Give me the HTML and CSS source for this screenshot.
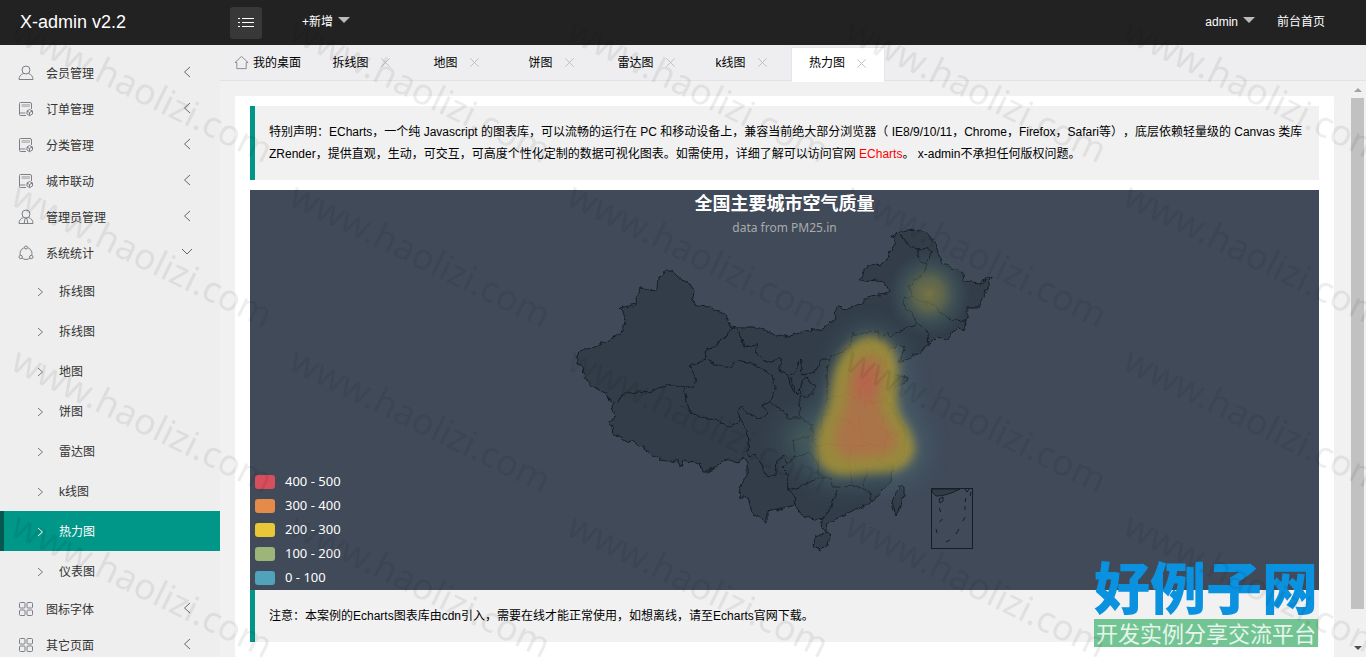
FILE: index.html
```html
<!DOCTYPE html>
<html lang="zh-CN">
<head>
<meta charset="utf-8">
<title>X-admin v2.2</title>
<link rel="stylesheet" href="styles.css">
</head>
<body>
<svg class="defs" aria-hidden="true">
  <symbol id="user" viewBox="0 0 16 16"><circle cx="8" cy="5" r="4"/><path d="M5.5 8.5C2.5 9.5 1 11.500 1 14.500h14c0-3-1.500-5-4.500-6"/></symbol>
  <symbol id="admin" viewBox="0 0 16 16"><circle cx="8" cy="5" r="4"/><path d="M5.500 8.500C2.500 9.500 1 11.500 1 14.500h14c0-3-1.500-5-4.500-6M7 9.500h2l.8 5M7 9.500l-.8 5"/></symbol>
  <symbol id="form" viewBox="0 0 16 16"><path d="M8 14.500H2.500q-1 0-1-1v-11q0-1 1-1H12q1.500 0 1.500 1.500v5M1.500 12h6"/><path d="M4 3.500h7.500v2H4z" class="soft"/><path d="M11.500 8.500l3 1.500v3l-3 1.700L9 13v-3zM9 10l2.500 1.500L14.500 10M11.500 11.500v3"/></symbol>
  <symbol id="share" viewBox="0 0 16 16"><circle cx="8" cy="8.500" r="6"/><circle cx="8" cy="2.500" r="1.500" class="node"/><circle cx="2.700" cy="12" r="1.700" class="node"/><circle cx="13.300" cy="12" r="1.700" class="node"/></symbol>
  <symbol id="grid" viewBox="0 0 16 16"><rect x="1.500" y="1.500" width="5.500" height="5.500" rx="1"/><rect x="9" y="1.500" width="5.500" height="5.500" rx="1"/><rect x="1.500" y="9" width="5.500" height="5.500" rx="1"/><rect x="9" y="9" width="5.500" height="5.500" rx="1"/></symbol>
  <symbol id="left" viewBox="0 0 12 12"><path d="M9 1L3.500 6 9 11"/></symbol>
  <symbol id="down" viewBox="0 0 12 12"><path d="M1 3l5 5 5-5"/></symbol>
  <symbol id="right" viewBox="0 0 12 12"><path d="M4 2l4.500 4L4 10"/></symbol>
  <symbol id="close" viewBox="0 0 12 12"><path d="M1.500 1.500l9 9M10.500 1.500l-9 9"/></symbol>
</svg>

<header class="header">
  <a class="brand" href="#">X-admin v2.2</a>
  <button class="toggle" type="button" aria-label="菜单">
    <svg viewBox="0 0 16 12"><path d="M4 1.500h12M4 5.500h12M4 9.500h12M0 1.500h2M0 5.500h2M0 9.500h2"/></svg>
  </button>
  <button class="add" type="button">+新增<span class="caret"></span></button>
  <nav class="account">
    <button class="add" type="button">admin<span class="caret"></span></button>
    <a href="#">前台首页</a>
  </nav>
</header>

<div class="layout">
  <nav class="side">
    <a class="item" href="#"><svg class="icon"><use href="#user"/></svg>会员管理<svg class="arrow"><use href="#left"/></svg></a>
    <a class="item" href="#"><svg class="icon"><use href="#form"/></svg>订单管理<svg class="arrow"><use href="#left"/></svg></a>
    <a class="item" href="#"><svg class="icon"><use href="#form"/></svg>分类管理<svg class="arrow"><use href="#left"/></svg></a>
    <a class="item" href="#"><svg class="icon"><use href="#form"/></svg>城市联动<svg class="arrow"><use href="#left"/></svg></a>
    <a class="item" href="#"><svg class="icon"><use href="#admin"/></svg>管理员管理<svg class="arrow"><use href="#left"/></svg></a>
    <a class="item" href="#"><svg class="icon"><use href="#share"/></svg>系统统计<svg class="arrow"><use href="#down"/></svg></a>
    <a class="sub" href="#"><svg><use href="#right"/></svg>拆线图</a>
    <a class="sub" href="#"><svg><use href="#right"/></svg>拆线图</a>
    <a class="sub" href="#"><svg><use href="#right"/></svg>地图</a>
    <a class="sub" href="#"><svg><use href="#right"/></svg>饼图</a>
    <a class="sub" href="#"><svg><use href="#right"/></svg>雷达图</a>
    <a class="sub" href="#"><svg><use href="#right"/></svg>k线图</a>
    <a class="sub active" href="#"><svg><use href="#right"/></svg>热力图</a>
    <a class="sub" href="#"><svg><use href="#right"/></svg>仪表图</a>
    <a class="item" href="#"><svg class="icon"><use href="#grid"/></svg>图标字体<svg class="arrow"><use href="#left"/></svg></a>
    <a class="item" href="#"><svg class="icon"><use href="#grid"/></svg>其它页面<svg class="arrow"><use href="#left"/></svg></a>
  </nav>

  <main class="main">
    <div class="tabs">
      <a class="home" href="#"><svg viewBox="0 0 16 16"><path d="M1 8l7-6.500L15 8h-2v6.500H3V8z"/></svg>我的桌面</a>
      <a class="tab" href="#">拆线图<svg><use href="#close"/></svg></a>
      <a class="tab" href="#">地图<svg><use href="#close"/></svg></a>
      <a class="tab" href="#">饼图<svg><use href="#close"/></svg></a>
      <a class="tab" href="#">雷达图<svg><use href="#close"/></svg></a>
      <a class="tab" href="#">k线图<svg><use href="#close"/></svg></a>
      <a class="tab current" href="#">热力图<svg><use href="#close"/></svg></a>
    </div>
    <div class="frame">
      <div class="page">
        <section class="card">
          <blockquote class="note">特别声明：ECharts，一个纯 Javascript 的图表库，可以流畅的运行在 PC 和移动设备上，兼容当前绝大部分浏览器（ IE8/9/10/11，Chrome，Firefox，Safari等），底层依赖轻量级的 Canvas 类库 ZRender，提供直观，生动，可交互，可高度个性化定制的数据可视化图表。如需使用，详细了解可以访问官网 <a href="#">ECharts</a>。 x-admin不承担任何版权问题。</blockquote>
          <div class="chart">
            <h1>全国主要城市空气质量</h1>
            <p class="source">data from PM25.in</p>
            <svg class="map" viewBox="250 190 1069 400" role="img" aria-label="空气质量热力图">
              <defs>
                <filter id="rough" x="-5%" y="-5%" width="110%" height="110%"><feTurbulence type="fractalNoise" baseFrequency=".16" numOctaves="2" seed="4"/><feDisplacementMap in="SourceGraphic" scale="6" xChannelSelector="R" yChannelSelector="G"/></filter>
                <filter id="b14" x="-60%" y="-60%" width="220%" height="220%"><feGaussianBlur stdDeviation="13"/></filter>
                <filter id="b5" x="-30%" y="-30%" width="160%" height="160%"><feGaussianBlur stdDeviation="5"/></filter>
                <filter id="b6" x="-40%" y="-40%" width="180%" height="180%"><feGaussianBlur stdDeviation="6"/></filter>
                <radialGradient id="spot"><stop offset="0" stop-color="#a29645" stop-opacity=".7"/><stop offset=".35" stop-color="#7d8450" stop-opacity=".65"/><stop offset=".65" stop-color="#4f6d69" stop-opacity=".4"/><stop offset="1" stop-color="#46606d" stop-opacity="0"/></radialGradient>
                <radialGradient id="haze"><stop offset="0" stop-color="#587464" stop-opacity=".4"/><stop offset="1" stop-color="#46606d" stop-opacity="0"/></radialGradient>
              </defs>
              <g class="land" filter="url(#rough)">
                <path d="M577 358L580 351L590 348L597 345L607 341L622 333L625 322L623 312L619 308L637 304L636 300L641 288L657 290L658 278L665 275L666 271L673 270L675 274L682 280L688 282L694 291L692 302L697 306L710 307L724 314L731 327L737 328L760 328L768 332L788 337L805 331L823 329L836 318L833 312L837 307L847 309L862 303L870 296L890 292L885 283L877 280L863 282L861 278L869 264L880 266L886 261L896 243L892 237L900 232L915 230L927 233L935 243L942 264L953 268L963 273L964 281L980 283L992 276L986 293L979 307L967 307L967 321L963 330L958 327L947 340L937 337L930 344L918 353L899 363L904 348L898 344L890 351L886 360L888 370L895 375L908 377L907 381L895 387L886 399L893 407L898 420L904 428L906 440L903 455L893 467L890 482L872 502L850 512L827 523L826 531L821 529L822 520L803 517L795 505L777 510L767 512L767 522L752 513L748 497L739 497L740 487L747 475L747 463L743 457L738 463L727 459L708 471L703 471L698 462L683 461L681 467L678 462L660 460L632 441L628 442L613 433L610 420L615 418L612 405L607 394L595 389L585 378L584 365L577 363Z"/>
                <path d="M815 537L828 532L830 537L828 544L820 550L813 545ZM892 502L895 493L900 486L904 487L904 495L901 505L896 516ZM869 527l1 0"/>
                <g class="borders">
                  <path d="M731 327L728 336L720 340L715 347L707 348L705 360L689 366L696 378L694 387L684 387L673 384L662 387L648 393L638 392L622 394L618 402L612 403M684 387L686 402L692 413L703 417L718 421L730 427L737 423L740 419L747 430L749 457M705 360L717 364L730 368L737 360L750 363L760 368L772 375L775 387L770 403L762 405L767 412L760 419L748 413L742 406L738 412L740 419M770 403L775 405L783 411L787 418L798 418M737 328L742 340L744 347L757 345L755 353L767 362L783 358L779 370L787 375L795 373L800 358L803 375L815 372L823 358L830 358L827 370L827 400L832 415L847 422L860 428L863 440L878 447M787 375L792 388L798 395M790 378L796 391L800 395L801 385L806 378L815 385L812 395L800 397L799 417M830 357L850 348L852 335L870 332L877 331L880 340L887 332L890 336L915 325L915 322L927 330L929 344M915 322L912 312L906 310L903 299L913 296L908 286L922 275L927 265L918 258L918 250L908 245L900 235M918 250L927 248L932 252L925 265M913 296L920 302L935 305L943 315L952 320L967 321"/>
                  <path d="M827 400L847 393L850 377L848 366L853 347M847 393L860 400L877 402L886 399M860 400L860 387L870 376L886 371M868 402L858 417L863 429M872 402L883 420L882 430L900 435M832 415L822 415L823 433L813 440L818 448L830 443L850 448L870 445L878 447M850 448L849 463L852 483M888 433L880 460L868 470L863 490M880 460L893 467M818 448L819 477L832 477L833 488L852 485L870 492L872 502M837 490L830 510L822 520M819 477L800 487L788 490L787 473L782 468L795 457L810 453L818 467M813 441L813 425L798 418M813 425L810 437L793 440L795 457M749 457L755 455L760 462L768 478L775 475L777 462L783 455L787 463M788 490L797 498L795 505M861 350L868 343L874 350L870 359L862 358ZM876 357L884 360L878 366"/>
                </g>
              </g>
              <g class="heat">
                <path d="M869 326C850 330 838 350 830 380L800 440Q805 490 835 485L905 482Q940 455 918 425L905 385Q912 340 869 326" fill="#50717a" opacity=".65" filter="url(#b14)"/>
                <ellipse cx="800" cy="438" rx="42" ry="42" fill="url(#haze)"/>
                <path d="M870 336C853 338 840 353 834 372C830 392 830 400 825 413Q811 440 818 461Q829 480 860 474L890 472Q913 468 915 448Q913 432 902 418Q894 402 898 382Q902 341 870 336" fill="#a7953a" filter="url(#b5)"/>
                <path d="M868 355Q853 363 849 382Q847 405 840 420Q832 434 836 450Q848 462 873 456Q897 455 898 441Q890 427 882 413Q876 398 884 369Q879 354 868 355" fill="#be7c49" filter="url(#b6)"/>
                <ellipse cx="866" cy="382" rx="11" ry="18" fill="#cf654f" opacity=".7" filter="url(#b6)"/>
                <ellipse cx="929" cy="294" rx="42" ry="44" fill="url(#spot)"/>
              </g>
              <g class="inset">
                <path class="filled" d="M932 489h28q-13 7-24 7l-4-4z"/>
                <rect x="931.500" y="488.500" width="41" height="60"/>
                <path d="M939 499l4-2v4l-3 2zM939.500 508l1 4M939.500 522l3-3M936 529l1 4M946 542l4-2M956 534l3-5M963 521l2-4M965 510v-4M965 502l1-4M970 496l1-4M965 489l2 3 2-3"/>
              </g>
            </svg>
            <ul class="legend">
              <li><span class="swatch s5"></span>400 - 500</li>
              <li><span class="swatch s4"></span>300 - 400</li>
              <li><span class="swatch s3"></span>200 - 300</li>
              <li><span class="swatch s2"></span>100 - 200</li>
              <li><span class="swatch s1"></span>0 - 100</li>
            </ul>
          </div>
          <blockquote class="note">注意：本案例的Echarts图表库由cdn引入，需要在线才能正常使用，如想离线，请至Echarts官网下载。</blockquote>
        </section>
      </div>
      <div class="scroll" aria-hidden="true"><span class="up"></span><span class="thumb"></span><span class="dn"></span></div>
    </div>
  </main>
</div>

<div class="stamp"><strong>好例子网</strong><span>开发实例分享交流平台</span></div>
<svg class="watermark" aria-hidden="true">
  <defs><pattern id="mark" x="4" y="10" width="278" height="165" patternUnits="userSpaceOnUse"><text x="5" y="29" transform="rotate(26 5 29)">www.haolizi.com</text></pattern></defs>
  <rect width="100%" height="100%" fill="url(#mark)"/>
</svg>
</body>
</html>
```
FILE: styles.css
```css
* { box-sizing: border-box; }
body {
  margin: 0;
  height: 100vh;
  display: flex;
  flex-direction: column;
  overflow: hidden;
  position: relative;
  background: #f1f1f1;
  color: #000;
  font: 12px/22px "Liberation Sans", "Noto Sans CJK SC", sans-serif;
  text-spacing-trim: space-all;
}
a { color: inherit; text-decoration: none; }
button { border: 0; padding: 0; background: none; color: inherit; font: inherit; }
svg { fill: none; stroke: currentColor; }
.defs { position: absolute; width: 0; height: 0; }
.soft { stroke: #bbb; fill: #ccc; }
.node { fill: #eee; }

.header {
  flex: none;
  display: flex;
  align-items: center;
  height: 45px;
  padding: 0 41px 2px 20px;
  background: #222;
  color: #fff;
}
.brand { width: 210px; font-size: 18px; }
.toggle {
  display: grid;
  place-items: center;
  width: 32px;
  height: 32px;
  margin: 2px 40px 0 0;
  border-radius: 3px;
  background: #383838;
}
.toggle svg { width: 16px; height: 12px; }
.add { display: flex; align-items: center; gap: 5px; }
.caret {
  border: 6px solid transparent;
  border-top-color: #bbb;
  border-bottom: 0;
  margin-bottom: 3px;
}
.account { display: flex; gap: 22px; margin-left: auto; }

.layout { flex: 1; display: flex; min-height: 0; }
.side {
  flex: none;
  width: 220px;
  padding-top: 10px;
  overflow: hidden;
  background: #eee;
  color: #333;
}
.item { display: flex; align-items: center; height: 36px; padding: 2px 27px 0 18px; }
.icon { width: 16px; height: 16px; margin: 0 12px 2px 0; stroke: #7c8086; }
.arrow { width: 12px; height: 12px; margin: 0 0 4px auto; stroke: #666; }
.sub { display: flex; align-items: center; gap: 13px; height: 40px; padding: 2px 0 0 34px; }
.sub svg { width: 12px; height: 12px; stroke: #777; }
.sub.active {
  padding-left: 30px;
  border-left: 4px solid #055850;
  background: #009688;
  color: #fff;
}
.sub.active svg { stroke: #fff; }

.main { flex: 1; display: flex; flex-direction: column; min-width: 0; }
.tabs {
  flex: none;
  display: flex;
  height: 36px;
  padding-left: 14px;
  border-bottom: 1px solid #e2e2e2;
  background: #eeeef1;
}
.home { display: flex; align-items: center; gap: 4px; width: 80px; }
.home svg { width: 15px; height: 15px; stroke: #888; }
.tab { display: flex; align-items: center; justify-content: center; gap: 11px; width: 95px; }
.tab svg { width: 11px; height: 11px; stroke: #bbb; }
.tab.current {
  width: 94px;
  height: 35px;
  margin: 2px 0 0 2px;
  padding-bottom: 4px;
  border: 1px solid #e6e6e6;
  border-bottom: 0;
  background: #fff;
}

.frame { flex: 1; display: flex; min-height: 0; }
.page { flex: 1; padding: 15px 15px 0; overflow: hidden; }
.card { padding: 10px 15px 15px; border-radius: 2px; background: #fff; }
.note {
  margin: 0;
  padding: 15px 15px 15px 14px;
  border-left: 5px solid #009688;
  background: #f1f1f1;
}
.note a { color: #f00; }
.card .chart { margin-top: 10px; }
.chart {
  position: relative;
  height: 400px;
  background: #404a59;
  color: #fff;
  font-family: "Noto Sans", "Noto Sans CJK SC", sans-serif;
}
.chart h1, .source {
  position: relative;
  z-index: 1;
  margin: 0;
  text-align: center;
}
.chart h1 { font-size: 18px; line-height: 26px; }
.source { color: #aaa; line-height: 24px; }
.map { position: absolute; inset: 0; width: 100%; height: 100%; }
.land { fill: #323c48; stroke: #171d24; stroke-width: 1; }
.borders { fill: none; }
.heat { stroke: none; opacity: .87; }
.inset { stroke: #171d24; }
.filled { fill: #323c48; }
.legend {
  position: absolute;
  left: 5px;
  bottom: 1px;
  margin: 0;
  padding: 0;
  list-style: none;
  font-size: 13px;
}
.legend li { display: flex; align-items: center; gap: 10px; height: 24px; }
.swatch { width: 20px; height: 14px; margin-top: 2px; border-radius: 3px; }
.s5 { background: #d94e5d; }
.s4 { background: #e48b4c; }
.s3 { background: #eac736; }
.s2 { background: #9db579; }
.s1 { background: #50a3ba; }

.scroll {
  flex: none;
  display: flex;
  flex-direction: column;
  align-items: center;
  width: 17px;
  padding: 7px 0;
  background: #f1f1f1;
}
.up, .dn { border: 4px solid transparent; }
.up { border-top: 0; border-bottom-color: #a3a3a3; }
.dn { border-bottom: 0; border-top-color: #505050; margin-top: auto; }
.thumb { width: 13px; height: 91%; margin-top: 6px; background: #c1c1c1; }

.stamp {
  position: absolute;
  right: 48px;
  bottom: 10px;
  display: flex;
  flex-direction: column;
  font-family: "Noto Sans CJK SC", sans-serif;
}
.stamp strong {
  margin-bottom: 4px;
  color: #0a92e0;
  font-size: 56px;
  font-weight: 900;
  line-height: 60px;
}
.stamp span {
  padding: 0 2px 2px;
  background: #72c493;
  color: #e6f5ec;
  font-size: 22px;
  line-height: 26px;
}
.watermark {
  position: absolute;
  inset: 0;
  width: 100%;
  height: 100%;
  stroke: none;
  pointer-events: none;
}
.watermark text {
  fill: #000;
  fill-opacity: .07;
  font: 36px "Noto Sans", sans-serif;
}
```
